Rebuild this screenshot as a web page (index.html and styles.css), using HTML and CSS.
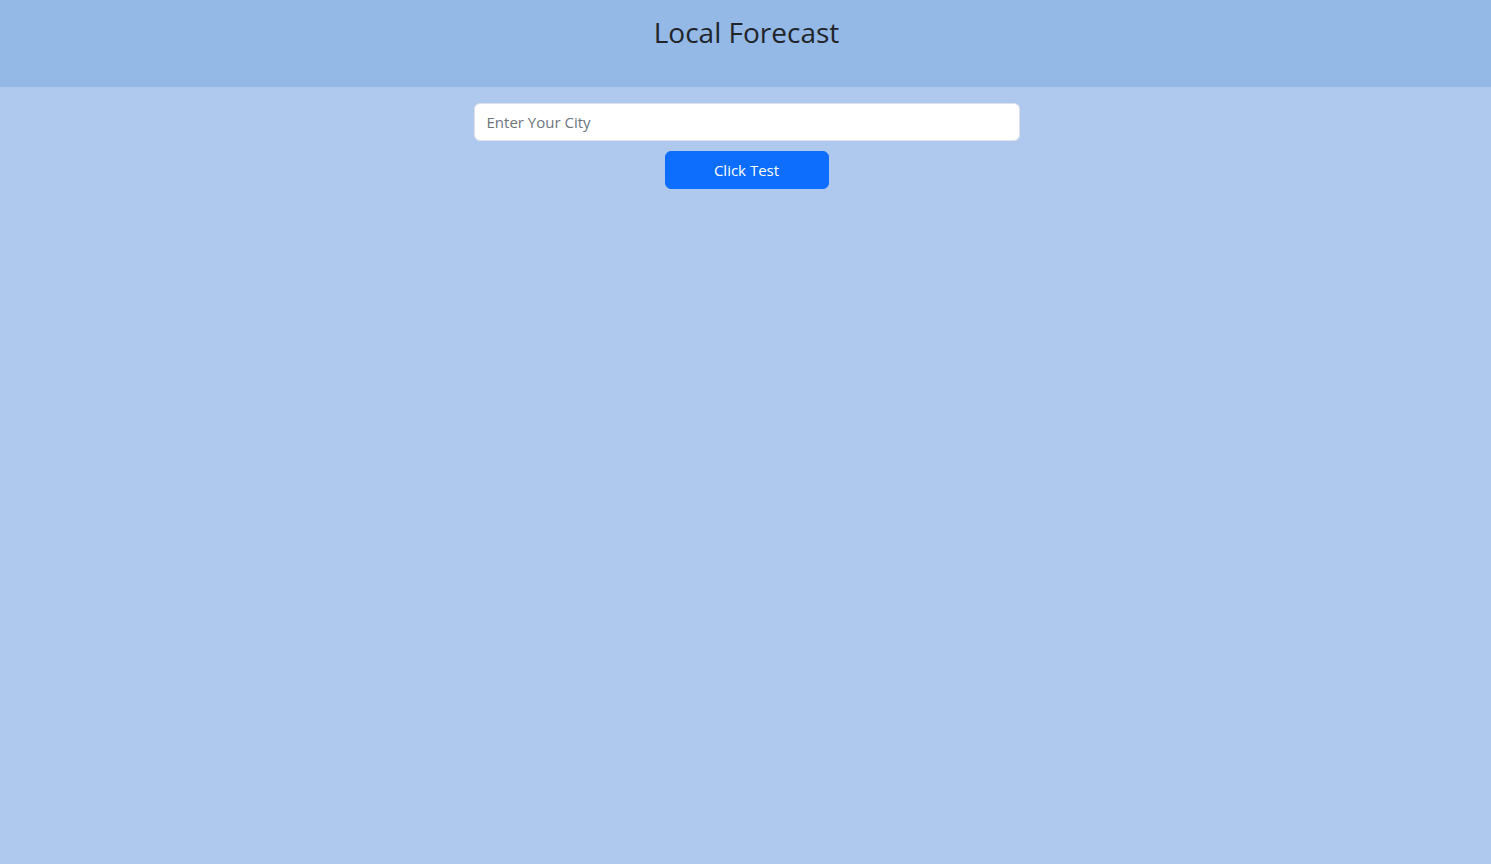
FILE: index.html
```html
<!DOCTYPE html>
<html lang="en">
<head>
<meta charset="utf-8">
<title>Local Forecast</title>
<link rel="stylesheet" href="styles.css">
</head>
<body>
<header class="site-header">
  <h2 class="title">Local Forecast</h2>
</header>
<main class="content">
  <input class="city-input" type="text" placeholder="Enter Your City">
  <button class="btn-primary" type="button">Click Test</button>
</main>
</body>
</html>
```
FILE: styles.css
```css
* { box-sizing: border-box; }
html, body { margin: 0; padding: 0; }
body {
  background: #afc9ee;
  font-family: "Open Sans", "Noto Sans", sans-serif;
  color: #212529;
  min-height: 100vh;
}
.site-header {
  background: #94b9e7;
  height: 87px;
  padding-top: 16px;
  padding-left: 2px;
  display: flex;
  justify-content: center;
}
.title {
  margin: 0;
  font-size: 28px;
  font-weight: 400;
  line-height: 1.2;
}
.content {
  display: flex;
  flex-direction: column;
  align-items: center;
  padding-top: 16px;
  padding-left: 2px;
  gap: 10px;
}
.city-input {
  width: 546px;
  height: 38px;
  padding: 6px 12px;
  font-family: inherit;
  font-size: 15px;
  color: #212529;
  background: #fff;
  border: 1px solid #dee2e6;
  border-radius: 6px;
  outline: none;
}
.city-input::placeholder { color: #6c757d; }
.btn-primary {
  width: 164px;
  height: 38px;
  background: #0d6efd;
  color: #fff;
  border: 1px solid #0d6efd;
  border-radius: 6px;
  font-family: inherit;
  font-size: 15px;
  cursor: pointer;
}
```
